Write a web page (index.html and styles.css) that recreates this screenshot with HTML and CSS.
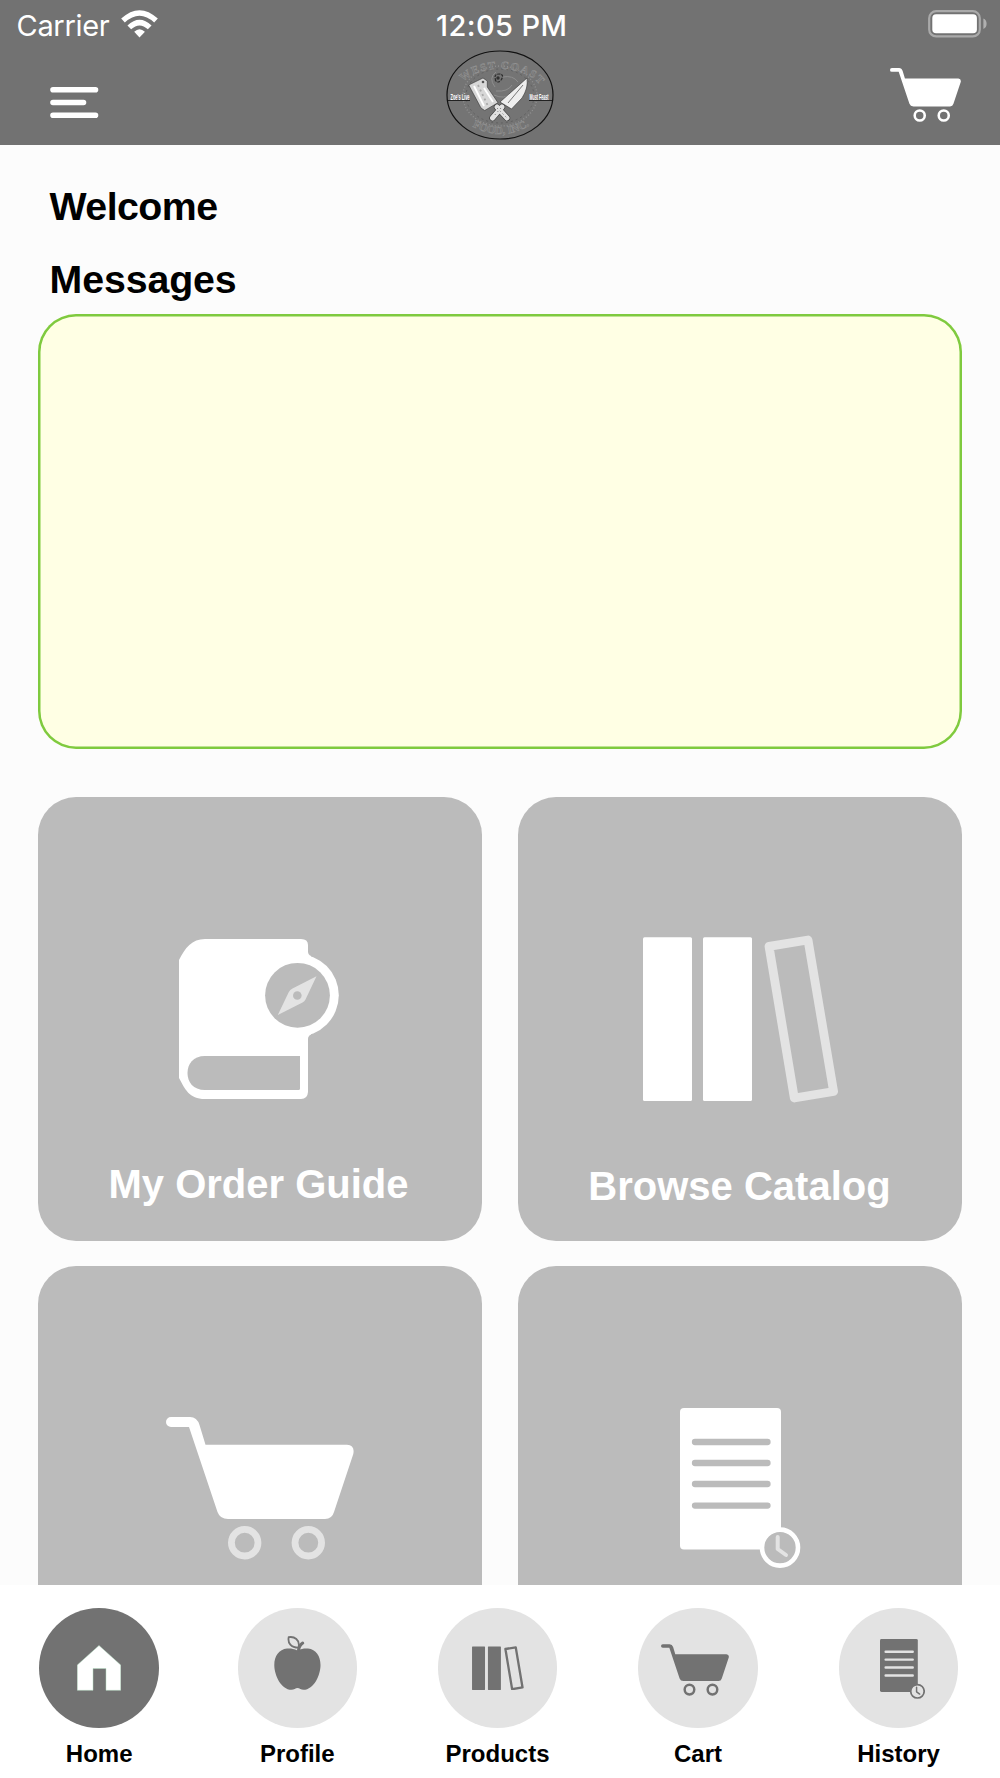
FILE: index.html
```html
<!DOCTYPE html>
<html lang="en">
<head>
    <meta charset="UTF-8">
    <meta name="viewport" content="width=device-width, initial-scale=1.0">
    <title>Home</title>
    <link rel="stylesheet" href="styles.css">
</head>
<body>
    <!-- Shared icons -->
    <svg class="sprite" width="0" height="0">
        <symbol id="icon-cart" viewBox="0 0 188 143">
            <path fill="currentColor" d="M5 0H24Q31 0 33.5 8L39.5 27.7H181Q189 28 187.3 37L168 95Q166 102 159 102H62Q54 102 51.5 95L23 10H5A5 5 0 0 1 5 0Z"/>
            <circle class="soft-line wheel" cx="78.7" cy="125.7" r="13.3"/>
            <circle class="soft-line wheel" cx="142.3" cy="125.7" r="13.3"/>
        </symbol>
        <symbol id="icon-catalog" viewBox="0 0 196 168">
            <rect fill="currentColor" x="0" y="2.3" width="49" height="163.7" rx="1.5"/>
            <rect fill="currentColor" x="60" y="2.3" width="49" height="163.7" rx="1.5"/>
            <path class="soft-line book-line" d="M126 11.3L165 5L190.6 156.5L151.3 163Z"/>
        </symbol>
        <symbol id="icon-history" viewBox="0 0 121 161">
            <rect fill="currentColor" width="101" height="141.5" rx="4"/>
            <path class="hole-line" d="M15 34H87.5M15 55H87.5M15 76H87.5M15 97.6H87.5"/>
            <circle class="clock" cx="100" cy="139.6" r="18"/>
            <path class="soft-line hands" d="M97.7 129V141L106 147"/>
        </symbol>
    </svg>

    <header class="header">
        <div class="status-bar">
            <div class="carrier">
                <span>Carrier</span>
                <svg width="37" height="28" viewBox="0 0 37 28">
                    <path fill="#fff" d="M18.5 27.4L13.2 21.8Q18.5 16.6 23.9 21.8Z"/>
                    <path fill="none" stroke="#fff" stroke-width="5.4" d="M8.3 17.4Q18.5 7.8 28.7 17.4"/>
                    <path fill="none" stroke="#fff" stroke-width="5.4" d="M2 10.6Q18.5-4.6 35 10.6"/>
                </svg>
            </div>
            <span class="time">12:05 PM</span>
            <svg class="battery" width="59" height="28" viewBox="0 0 59 28">
                <rect x="1.2" y="1.2" width="50.6" height="25.2" rx="7" fill="none" stroke="#aaa" stroke-width="2.2"/>
                <rect x="4.3" y="4.3" width="44.6" height="19" rx="3.8" fill="#fff"/>
                <path d="M55.4 8.6Q58.6 10 58.6 13.8T55.4 19Z" fill="#b0b0b0"/>
            </svg>
        </div>
        <div class="toolbar">
            <svg class="menu" width="49" height="31" viewBox="0 0 49 31">
                <path fill="none" stroke="#fff" stroke-width="5.6" stroke-linecap="round" d="M3 2.8H45.5M3 15.5H33.5M3 28.2H45.5"/>
            </svg>
            <svg class="logo" width="108" height="90" viewBox="0 0 108 90">
                <defs>
                    <path id="arc-top" d="M15 34A43 26 0 0 1 93 34"/>
                    <path id="arc-bottom" d="M22 74Q54 94 86 74"/>
                </defs>
                <ellipse cx="54" cy="45" rx="53" ry="44" fill="#747474" stroke="#111" stroke-width="1.2"/>
                <ellipse cx="54" cy="46" rx="37" ry="30" fill="none" stroke="#939393" stroke-width="1.3" stroke-dasharray="1 2"/>
                <ellipse cx="54" cy="46" rx="34" ry="27" fill="none" stroke="#606060" stroke-width="1" stroke-dasharray="2 3"/>
                <text class="logo-arc"><textPath href="#arc-top" startOffset="3" textLength="84">WEST COAST</textPath></text>
                <text class="logo-arc"><textPath href="#arc-bottom" startOffset="5" textLength="60">FOOD, INC.</textPath></text>
                <path fill="none" stroke="#8e8e8e" stroke-width="1" d="M49 37Q42 28 50 22M50 41Q62 42 66 35M57 27Q67 25 72 32M48 45Q58 50 66 43"/>
                <path fill="none" stroke="#2c2c2c" stroke-width="1.2" stroke-dasharray="3 1" d="M50 31Q47 24 53 24T55 30Q52 34 49 30"/>
                <circle cx="52" cy="28" r="1.7" fill="#303030"/>
                <path stroke="#222" stroke-width="1" d="M2 50.500H24M83 50.500H106"/>
                <text class="logo-side" x="4.500" y="49.600" textLength="19" lengthAdjust="spacingAndGlyphs">Zoe's Live</text>
                <text class="logo-side" x="83.500" y="49.600" textLength="19" lengthAdjust="spacingAndGlyphs">Must Feast</text>
                <path fill="#d8d8d8" stroke="#333" stroke-width=".6" d="M22.700 35L37 28L41.300 31L41.300 37L52 52.700L38.700 60.500L35 58Z"/>
                <path fill="none" stroke="#fff" stroke-width="1.800" d="M28 36L38 56M38 38L47 52"/>
                <path fill="none" stroke="#a8a8a8" stroke-width="1.800" stroke-dasharray="2 3" d="M32 35L42 56"/>
                <circle cx="37" cy="32" r="1.300" fill="#555"/>
                <path fill="#eee" stroke="#333" stroke-width=".6" d="M81 28Q82.500 38 76 48L65.500 59L54 52Z"/>
                <path stroke="#777" stroke-width="1" d="M77 35L62 53"/>
                <path stroke="#333" stroke-width="6.200" stroke-linecap="round" d="M56 57L46.500 68M51 57L61 68"/>
                <path stroke="#e2e2e2" stroke-width="5" stroke-linecap="round" d="M56 57L46.500 68M51 57L61 68"/>
                <path stroke="#666" stroke-width="1" stroke-dasharray="1 3" d="M51 58L61 68M55 58L47 67"/>
            </svg>
            <svg class="header-cart" width="71" height="54"><use href="#icon-cart"/></svg>
        </div>
    </header>

    <main class="content">
        <h1 class="welcome">Welcome</h1>
        <h1 class="messages-title">Messages</h1>
        <div class="messages"></div>

        <div class="cards">
            <a class="card">
                <svg class="guide-icon" width="160" height="160" viewBox="0 0 160 160">
                    <path fill="#fff" d="M26 0H122Q129 0 129 6V12.5Q129 15.5 132 17V95.5Q129 97 129 100V153Q128.500 160 122 160H26C10 160 6 150 0 139V21C6 9 13 0 26 0Z"/>
                    <circle cx="118.500" cy="56.300" r="41.300" fill="#fff"/>
                    <circle cx="118.500" cy="56.300" r="32.400" fill="#bbb"/>
                    <path fill="#bbb" d="M26 117H121V149.500Q121 151 119.500 151H26C14 151 8.500 143 8.500 134S14 117 26 117Z"/>
                    <path fill="#e3e3e3" d="M137.500 37.200L126.500 60.500Q125.500 62.600 123.500 63.600L98.800 76L109.700 53.200Q111 50.800 113.500 49.500Z"/>
                    <circle cx="118.300" cy="56.500" r="4.300" fill="#bbb"/>
                </svg>
                <span class="label order-guide">My Order Guide</span>
            </a>
            <a class="card">
                <svg class="catalog-icon" width="196" height="168"><use href="#icon-catalog"/></svg>
                <span class="label browse">Browse Catalog</span>
            </a>
            <a class="card">
                <svg width="188" height="143"><use href="#icon-cart"/></svg>
            </a>
            <a class="card">
                <svg width="121" height="161"><use href="#icon-history"/></svg>
            </a>
        </div>
    </main>

    <nav class="tabs">
        <a class="tab active">
            <span class="circle">
                <svg width="44" height="46" viewBox="0 0 44 46">
                    <path fill="#fff" stroke="#b5dfc3" stroke-width=".5" d="M22 .5L43.700 20V45.300H29V23.500H16V45.300H.3V20Z"/>
                </svg>
            </span>
            <span class="tab-label">Home</span>
        </a>
        <a class="tab">
            <span class="circle">
                <svg class="apple" width="47" height="54" viewBox="0 0 47 54">
                    <path fill="currentColor" d="M23.500 14.500C28 12.500 31 12.200 34 12.600C42 13.500 46.500 20 46.500 29C46.500 39 40 53.800 29.500 53.800C27 53.800 25.500 52 23.500 52S20 53.800 17.500 53.800C7 53.800 .3 39 .3 29C.3 20 5 13.500 13 12.600C16 12.200 19 12.500 23.500 14.500Z"/>
                    <path fill="none" stroke="currentColor" stroke-width="1.800" d="M14.700 1.200C20 .2 26.500 3.500 24.500 11.700C17 11.500 13.500 7 14.700 1.200Z"/>
                    <path fill="none" stroke="currentColor" stroke-width="3" stroke-linecap="round" d="M24.500 14.500Q25 9.500 28.700 7"/>
                </svg>
            </span>
            <span class="tab-label">Profile</span>
        </a>
        <a class="tab">
            <span class="circle"><svg class="tab-catalog" width="52" height="44.500"><use href="#icon-catalog"/></svg></span>
            <span class="tab-label">Products</span>
        </a>
        <a class="tab">
            <span class="circle"><svg class="tab-cart" width="68" height="52"><use href="#icon-cart"/></svg></span>
            <span class="tab-label">Cart</span>
        </a>
        <a class="tab">
            <span class="circle"><svg class="tab-history" width="45.300" height="60.300"><use href="#icon-history"/></svg></span>
            <span class="tab-label">History</span>
        </a>
    </nav>
</body>
</html>
```

FILE: styles.css
```css
* {
    box-sizing: border-box;
}
body {
    margin: 0;
    height: 1778px;
    display: flex;
    flex-direction: column;
    overflow: hidden;
    font-family: "Liberation Sans", Arial, sans-serif;
    background-color: #fcfcfc;
    color: #000;
}
svg {
    display: block;
    flex-shrink: 0;
}
.sprite {
    position: absolute;
}

/* Icon parts */
.soft-line {
    fill: none;
    stroke: var(--soft);
    stroke-linecap: round;
    stroke-linejoin: round;
}
.wheel {
    stroke-width: 6.8px;
}
.book-line {
    stroke-width: 8.8px;
}
.hands {
    stroke-width: 4px;
}
.hole-line {
    stroke: var(--hole);
    stroke-width: 6.3px;
    stroke-linecap: round;
}
.clock {
    fill: var(--hole);
    stroke: currentColor;
    stroke-width: 4.6px;
}

/* Header */
.header {
    flex-shrink: 0;
    height: 145px;
    background-color: #727272;
    color: #fff;
    --soft: #fff;
}
.status-bar {
    height: 50px;
    display: grid;
    grid-template-columns: 1fr auto 1fr;
    align-items: center;
    padding: 0 13px 0 16.5px;
    font-family: Inter, sans-serif;
    font-size: 29px;
}
.carrier {
    display: flex;
    gap: 11.5px;
    align-items: center;
    letter-spacing: -0.3px;
}
.carrier svg {
    margin-top: -3px;
}
.time {
    font-weight: 500;
    letter-spacing: 0.4px;
}
.battery {
    justify-self: end;
    margin-top: -2px;
}
.toolbar {
    height: 95px;
    display: grid;
    grid-template-columns: 1fr auto 1fr;
    padding: 0 39px 0 50px;
}
.menu {
    margin-top: 37px;
}
.logo {
    margin-left: -11px;
}
.header-cart {
    justify-self: end;
    margin-top: 17.5px;
}
.logo-arc {
    font: bold 11px "Liberation Serif", serif;
    fill: #777;
    stroke: #929292;
    stroke-width: 0.5px;
}
.logo-side {
    font: bold 9px "Liberation Sans", sans-serif;
    fill: #fff;
}

/* Page content */
.content {
    height: 1439.5px;
    flex-shrink: 0;
    overflow: hidden;
    padding: 39px 38px 0 37.5px;
}
h1 {
    margin: 0 0 0 12px;
    font-size: 39.3px;
    line-height: 44px;
}
.welcome {
    letter-spacing: -0.55px;
}
.messages-title {
    margin-top: 28.5px;
    letter-spacing: -0.1px;
}
.messages {
    height: 435px;
    margin-top: 13.5px;
    border-radius: 38px;
    background-color: #ffffe4;
    box-shadow: inset 0 0 0 2.5px #7fca3f;
}
.cards {
    display: grid;
    grid-template-columns: 444px 444px;
    grid-auto-rows: 444px;
    gap: 25px 36.5px;
    margin-top: 48px;
}
.card {
    display: grid;
    place-items: center;
    border-radius: 38px;
    background-color: #bbb;
    color: #fff;
    --soft: #e3e3e3;
    --hole: #bbb;
}
.card > * {
    grid-area: 1 / 1;
}
.guide-icon {
    margin-right: 1px;
}
.catalog-icon {
    margin-left: 1.5px;
}
.label {
    align-self: end;
    margin-bottom: 35px;
    font-size: 40px;
    line-height: 44px;
    font-weight: bold;
}
.order-guide {
    margin-right: 2px;
}
.browse {
    margin-bottom: 33.5px;
    margin-right: 1px;
}

/* Bottom tabs */
.tabs {
    flex: 1;
    display: grid;
    grid-template-columns: 198.3px 198px 202.4px 198.6px 202.6px;
    padding-top: 23.5px;
    background-color: #fff;
}
.tab {
    display: flex;
    flex-direction: column;
    align-items: center;
    color: #727272;
    --soft: #727272;
    --hole: #e3e3e3;
}
.circle {
    width: 119.5px;
    height: 119.5px;
    display: flex;
    align-items: center;
    justify-content: center;
    border-radius: 50%;
    background-color: #e3e3e3;
}
.active .circle {
    background-color: #727272;
}
.tab-label {
    margin-top: 12.5px;
    font-size: 24px;
    line-height: 28px;
    font-weight: bold;
    color: #000;
}
.apple {
    margin-top: -9px;
}
.tab-catalog {
    margin-left: 1px;
}
.tab-cart {
    margin: 4px 6px 0 0;
}
.tab-history {
    margin: 2px 0 0 8px;
}
```
